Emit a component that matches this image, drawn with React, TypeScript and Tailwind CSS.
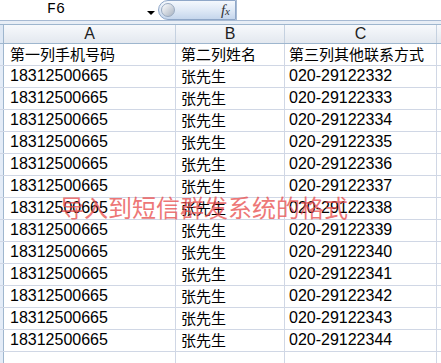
import React from "react";

const rows = Array.from({ length: 13 }, (_, i) => ({
  a: "18312500665",
  b: "张先生",
  c: `020-291223${32 + i}`,
}));

const num = { fontFamily: '"Liberation Sans", Arial, sans-serif' };
const cjk = { fontFamily: '"Noto Sans CJK SC", "Liberation Sans", sans-serif' };

function Row({ a, b, c, head }: { a: string; b: string; c: string; head?: boolean }) {
  return (
    <div className="flex h-[22px] border-b border-[#d0d7e5]">
      <div className="w-[4px] shrink-0 border-r border-[#9eb6ce] bg-[#e4ecf7]" />
      <div
        className={`w-[172px] shrink-0 border-r border-[#d0d7e5] pl-[6px] flex items-end pb-[1px] ${head ? "text-[15px]" : "text-[16px]"} leading-[20px] text-black`}
        style={head ? cjk : num}
      >
        {a}
      </div>
      <div
        className="w-[109px] shrink-0 border-r border-[#d0d7e5] pl-[5px] flex items-end pb-[1px] text-[15px] leading-[20px] text-black"
        style={cjk}
      >
        {b}
      </div>
      <div
        className={`w-[152px] shrink-0 border-r border-[#d0d7e5] pl-[4px] flex items-end pb-[1px] ${head ? "text-[15px]" : "text-[16px]"} leading-[20px] text-black`}
        style={head ? cjk : num}
      >
        {c}
      </div>
      <div className="flex-1" />
    </div>
  );
}

export default function App() {
  return (
    <div className="relative w-[441px] h-[363px] overflow-hidden bg-white">
      {/* formula bar */}
      <div className="flex h-[21px] border-b border-[#a7bad3] bg-white">
        <div className="relative w-[158px] shrink-0 flex items-center">
          <span
            className="ml-[47px] text-[15px] leading-[18px] text-black"
            style={{ fontFamily: '"Liberation Mono", monospace' }}
          >
            F6
          </span>
          <span className="absolute left-[147px] top-[11px] w-0 h-0 border-l-[4px] border-r-[4px] border-t-[4px] border-l-transparent border-r-transparent border-t-black" />
        </div>
        <div className="w-[78px] shrink-0 h-[20px] rounded-l-full border border-[#8fa7c8] bg-gradient-to-b from-[#f4f8fd] via-[#dfe9f6] to-[#c5d6ec] flex items-center relative">
          <div className="ml-[2px] w-[14px] h-[14px] rounded-full border border-[#9aaac0] bg-gradient-to-br from-[#ffffff] to-[#a9b3c1]" />
          <span
            className="absolute right-[5px] top-[0px] text-[15px] italic leading-[18px] text-[#333]"
            style={{ fontFamily: '"Liberation Serif", serif' }}
          >
            f<span className="text-[11px]">x</span>
          </span>
        </div>
        <div className="flex-1 border-l border-[#a7bad3] bg-white" />
      </div>
      <div className="h-[4px] bg-[#e8eef6] border-b border-[#9eb6ce]" />
      {/* column header */}
      <div className="flex h-[19px] border-b border-[#9eb6ce] bg-gradient-to-b from-[#f7f9fc] to-[#e3e8ef]">
        <div className="w-[4px] shrink-0 border-r border-[#9eb6ce] bg-[#dde7f4]" />
        {["A", "B", "C"].map((l, i) => (
          <div
            key={l}
            className={`${i === 0 ? "w-[172px]" : i === 1 ? "w-[109px]" : "w-[152px]"} shrink-0 border-r border-[#c5d1e0] flex items-center justify-center text-[16px] leading-[18px] text-[#1e1e1e]`}
            style={num}
          >
            {l}
          </div>
        ))}
        <div className="flex-1" />
      </div>
      <Row a="第一列手机号码" b="第二列姓名" c="第三列其他联系方式" head />
      {rows.map((r, i) => (
        <Row key={i} a={r.a} b={r.b} c={r.c} />
      ))}
      <div className="flex h-[22px]">
        <div className="w-[4px] shrink-0 border-r border-[#9eb6ce] bg-[#e4ecf7]" />
        <div className="w-[172px] shrink-0 border-r border-[#d0d7e5]" />
        <div className="w-[109px] shrink-0 border-r border-[#d0d7e5]" />
        <div className="w-[152px] shrink-0 border-r border-[#d0d7e5]" />
      </div>
      {/* overlay label */}
      <div
        className="absolute left-[60px] top-[193px] text-[24px] leading-[28px] text-[#e84a4a] opacity-75 whitespace-nowrap"
        style={cjk}
      >
        导入到短信群发系统的格式
      </div>
    </div>
  );
}
